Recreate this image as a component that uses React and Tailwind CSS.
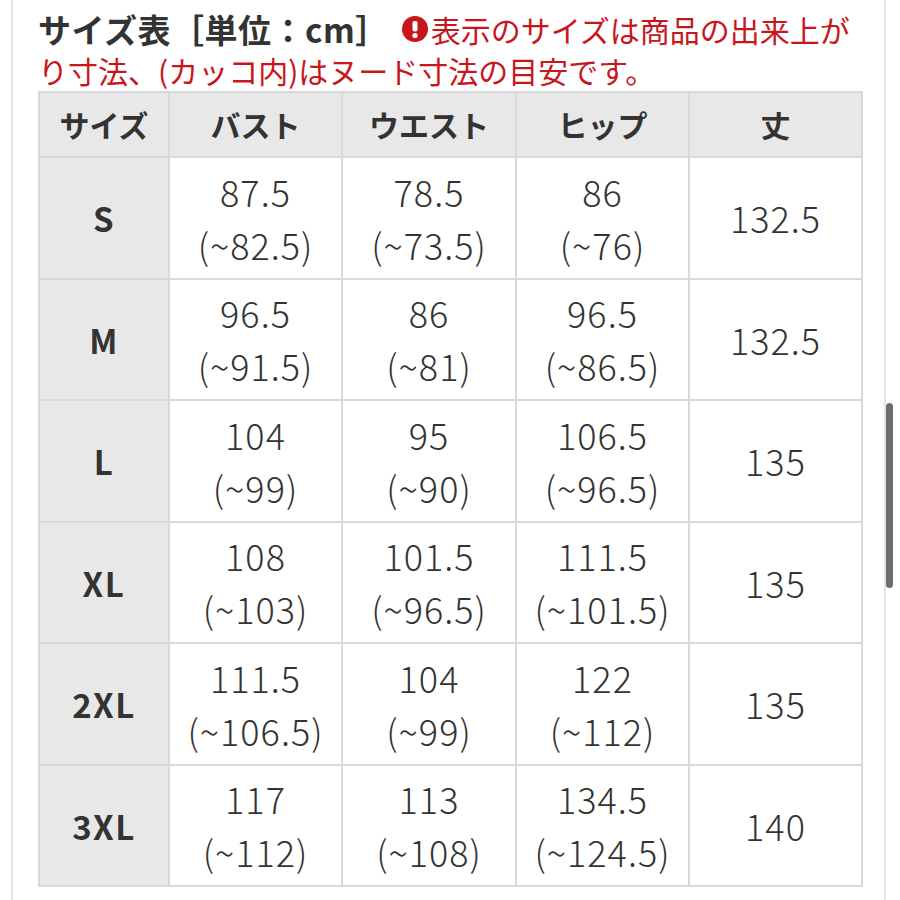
import React from "react";

const rows = [
  ["S", ["87.5", "(~82.5)"], ["78.5", "(~73.5)"], ["86", "(~76)"], ["132.5"]],
  ["M", ["96.5", "(~91.5)"], ["86", "(~81)"], ["96.5", "(~86.5)"], ["132.5"]],
  ["L", ["104", "(~99)"], ["95", "(~90)"], ["106.5", "(~96.5)"], ["135"]],
  ["XL", ["108", "(~103)"], ["101.5", "(~96.5)"], ["111.5", "(~101.5)"], ["135"]],
  ["2XL", ["111.5", "(~106.5)"], ["104", "(~99)"], ["122", "(~112)"], ["135"]],
  ["3XL", ["117", "(~112)"], ["113", "(~108)"], ["134.5", "(~124.5)"], ["140"]],
];

const headers = ["サイズ", "バスト", "ウエスト", "ヒップ", "丈"];

const font = { fontFamily: '"Noto Sans CJK JP", "Noto Sans", sans-serif' };

export default function App() {
  return (
    <div className="relative w-[900px] h-[900px] overflow-hidden bg-white" style={font}>
      <div className="ml-[11px] w-[875px] h-[900px] border-l-2 border-r-2 border-[#e3e3e3] pl-[25px]">
        <div className="pt-[9px]">
          <div className="h-[40px] flex items-center whitespace-nowrap">
            <span className="text-[33px] leading-none font-bold text-[#333333] tracking-[0.5px]">サイズ表［単位：cm］</span>
            <span className="ml-[13px] mr-[3px] flex">
              <svg width="26" height="26" viewBox="0 0 26 26">
                <circle cx="13" cy="13" r="13" fill="#c8161d" />
                <rect x="10.5" y="5" width="5" height="10.5" rx="2" fill="#ffffff" />
                <circle cx="13" cy="19.5" r="2.6" fill="#ffffff" />
              </svg>
            </span>
            <span className="text-[30px] leading-none text-[#c8161d]">表示のサイズは商品の出来上が</span>
          </div>
          <div className="h-[42px] flex items-center whitespace-nowrap">
            <span className="text-[30px] leading-none text-[#c8161d]">り寸法、(カッコ内)はヌード寸法の目安です。</span>
          </div>
        </div>
        <div className="grid grid-cols-[128px_171px_172px_171px_171px] grid-rows-[63px_repeat(6,119.5px)] gap-[2px] p-[2px] bg-[#d9d9d9] w-[825px]">
          {headers.map((h) => (
            <div
              key={h}
              className="bg-[#e8e8e8] flex items-center justify-center text-[30px] font-bold text-[#333333]"
            >
              {h}
            </div>
          ))}
          {rows.map((r) => (
            <React.Fragment key={r[0]}>
              <div className="bg-[#e8e8e8] flex items-center justify-center text-[33px] font-bold text-[#333333] tracking-[1.5px] pt-[2px]">
                {r[0]}
              </div>
              {r.slice(1).map((cell, i) => (
                <div
                  key={i}
                  className="bg-white flex flex-col items-center justify-center text-[36px] font-light text-[#333333] leading-[53px] tracking-[1px]"
                >
                  {cell.map((t) => (
                    <span key={t}>{t}</span>
                  ))}
                </div>
              ))}
            </React.Fragment>
          ))}
        </div>
      </div>
      <div className="absolute left-[886px] top-[403px] w-[7px] h-[185px] rounded-full bg-[#6e6e6e]"></div>
    </div>
  );
}
